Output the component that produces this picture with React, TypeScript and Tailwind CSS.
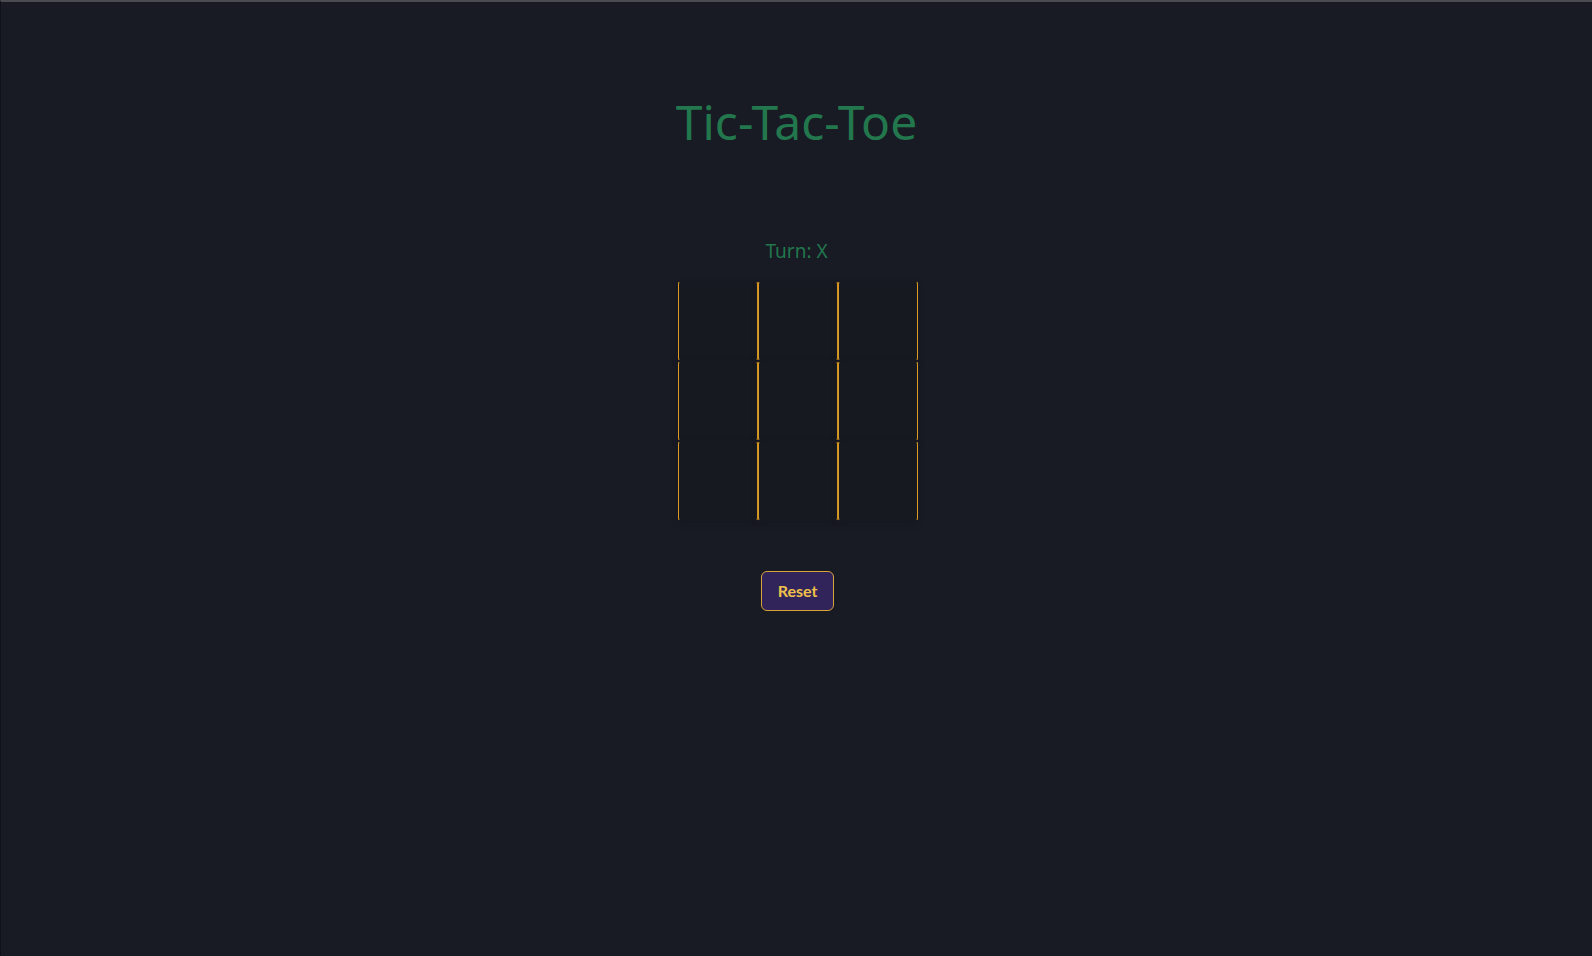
import { useState } from "react"

type Cell = "X" | "O" | null

export default function App() {
  const [board, setBoard] = useState<Cell[]>(Array(9).fill(null))
  const [turn, setTurn] = useState<"X" | "O">("X")

  const play = (i: number) => {
    if (board[i]) return
    const next = [...board]
    next[i] = turn
    setBoard(next)
    setTurn(turn === "X" ? "O" : "X")
  }

  const reset = () => {
    setBoard(Array(9).fill(null))
    setTurn("X")
  }

  return (
    <div className="min-h-screen bg-[#181a24] border-t-2 border-t-[#4a4b50] border-l border-l-[#101117] flex flex-col items-center font-['Noto_Sans',sans-serif]">
      <h1 className="pt-[96px] text-[48px] leading-none font-normal text-[#22774d]">
        Tic-Tac-Toe
      </h1>

      <p className="mt-[91px] text-[19px] leading-7 font-normal text-[#22774d]">Turn: {turn}</p>

      {/* Board */}
      <div className="mt-4 ml-[2px] grid grid-cols-3">
        {board.map((cell, i) => (
          <button
            key={i}
            onClick={() => play(i)}
            className="w-20 h-20 border border-x-[#dc9b22] border-y-transparent rounded-[3px] bg-[#171921] shadow-[0_3px_8px_rgba(0,0,0,0.12)] text-4xl text-[#dc9b22]"
          >
            {cell}
          </button>
        ))}
      </div>

      <button
        onClick={reset}
        className="mt-[50px] ml-[2px] h-[40px] px-4 rounded-md border border-[#d9a23a] bg-[#30245a] text-[#f0c14a] text-base font-bold font-['Lato',sans-serif]"
      >
        Reset
      </button>
    </div>
  )
}
